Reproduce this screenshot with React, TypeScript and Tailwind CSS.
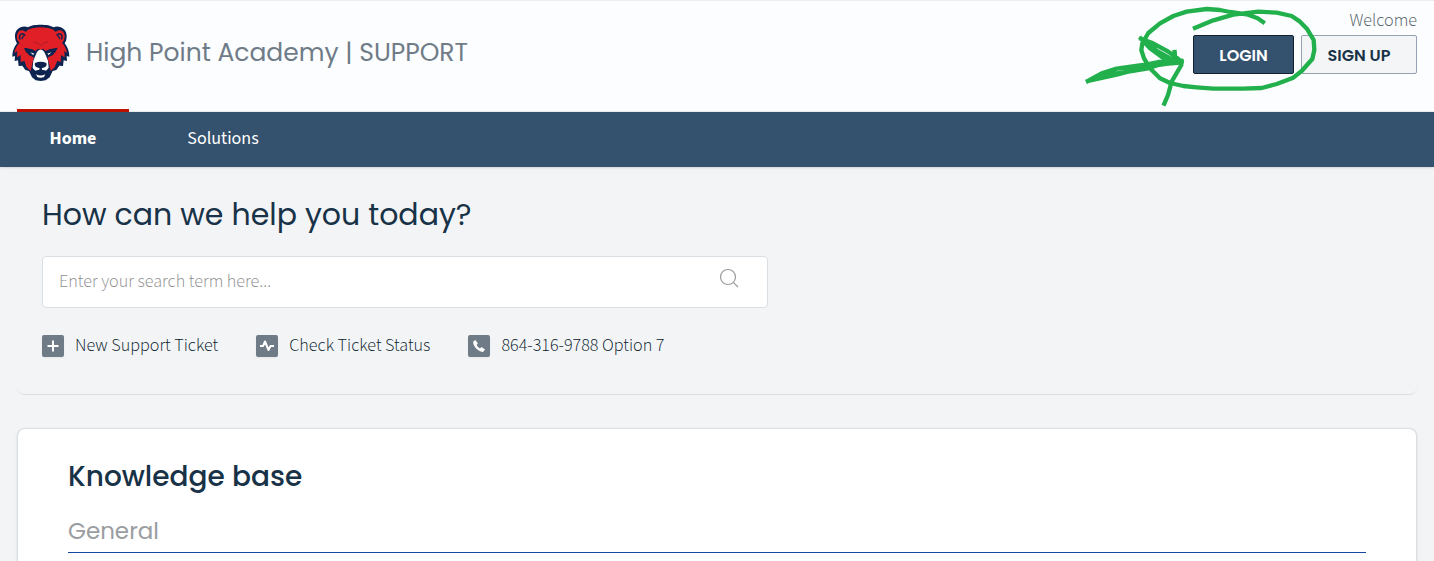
import { FormEvent, ReactNode, useState } from "react";

const display = "font-['Poppins','Inter',sans-serif]";
const body = "font-['Source_Sans_Pro','Source_Sans_3','Noto_Sans_CJK_SC','Noto_Sans',sans-serif]";

function BearLogo() {
  return (
    <svg className="size-[60px] shrink-0" viewBox="33 40 180 180" aria-hidden="true">
      <path
        fill="#0d2350"
        d="M84 53C97 43 147 43 160 53C178 45 201 58 200 80C200 90 197 97 194 101C201 110 208 123 208 141L200 139L201 154L191 152L189 169L178 168L169 181L158 184L149 203L137 212L122 214L107 212L96 203L87 184L76 181L67 168L56 169L54 152L44 154L45 139L37 141C37 123 44 110 51 101C48 97 45 90 45 80C44 58 66 45 84 53Z"
      />
      <path
        fill="#e01f26"
        d="M84 60C99 50 145 50 160 60L167 67C178 57 192 63 194 77C195 88 191 95 186 99C194 108 199 117 201 130L193 124L194 143L183 136L182 158L172 153L164 173L152 184L146 157L142 141L166 128L172 116L150 119L137 124L130 117L122 121L114 117L107 124L94 119L72 116L78 128L102 141L98 157L92 184L80 173L73 153L62 158L62 136L51 143L52 124L43 130C45 117 50 108 59 99C54 95 49 88 51 77C53 63 67 57 77 67Z"
      />
      <path
        fill="none"
        stroke="#0d2350"
        strokeWidth="4"
        strokeLinecap="round"
        d="M60 88C55 74 66 68 74 76Q68 80 66 87M185 88C190 74 179 68 171 76Q177 80 179 87"
      />
      <path
        fill="#0d2350"
        d="M72 114L96 119L115 129L104 144L86 136ZM173 114L149 119L130 129L141 144L159 136Z"
      />
      <path
        fill="none"
        stroke="#b01c2a"
        strokeWidth="3"
        d="M100 97L114 101L122 108L130 101L144 97"
      />
      <path
        fill="#fff"
        d="M108 134Q112 120 122 120Q132 120 136 134L144 153L146 174L139 183L126 180L122 172L118 180L105 183L98 174L100 153ZM91 128L103 132L99 136ZM154 128L142 132L146 136ZM108 194Q122 201 136 194L132 202Q122 207 112 202Z"
      />
      <path
        fill="#0d2350"
        d="M105 160Q122 152 139 160Q142 168 134 173L125 176V183L138 184L145 179L139 190L122 194L105 190L99 179L106 184L119 183V176L110 173Q102 168 105 160Z"
      />
    </svg>
  );
}

// Hand-drawn marker around the login button
function LoginMarker() {
  return (
    <svg
      className="pointer-events-none absolute -top-px right-0 h-[115px] w-[354px]"
      viewBox="0 0 1062 345"
      fill="none"
      stroke="#22b04c"
      strokeWidth="13"
      strokeLinecap="square"
      strokeLinejoin="round"
      aria-hidden="true"
    >
      <path d="M549 66L533 55L500 43L450 36L420 30L380 27L320 35L280 48L240 70L205 99L187 130L184 150L192 175L210 205L240 235L270 249L310 258L350 262L400 266H490L545 264L590 252L640 233L665 213L697 177L703 150L701 120L682 88L660 65L635 48L590 38L535 35L460 44L400 61L345 84" />
      <path d="M24 243L65 220L110 206L190 195L235 186L305 184M30 242L100 222L200 206L240 193L300 188M24 243L110 224L210 198L270 190L290 184" />
      <path d="M183 116L215 128L265 155L284 168L304 185M183 116L210 145L255 178L275 187L303 183M192 120L230 153L268 174L290 184M284 156L286 178L300 184" />
      <path d="M303 184L304 195L275 245L264 285L253 311" />
    </svg>
  );
}

function QuickLink({ label, children }: { label: string; children: ReactNode }) {
  return (
    <a href="#" className="flex items-center gap-[11px] text-[#06192a]">
      <span className="flex size-[22px] items-center justify-center rounded-xs bg-[#6f7c87] text-white shadow-xs">
        <svg className="size-4" viewBox="0 0 16 16" fill="none" stroke="currentColor" strokeWidth="2">
          {children}
        </svg>
      </span>
      {label}
    </a>
  );
}

function Header() {
  return (
    <header className="relative flex h-28 justify-between border-y border-[#ebedef] bg-[#fcfdff] pr-[17px] pl-[11px]">
      <a href="#" className="flex h-[104px] items-center gap-[15px] text-[#6f7c87]">
        <BearLogo />
        <span className={`${display} text-[25px] whitespace-nowrap`}>
          High Point Academy | SUPPORT
        </span>
      </a>
      <div className="flex flex-col items-end pt-2">
        <span className="text-lg leading-6 font-light text-[#4d5963]">Welcome</span>
        <div className={`${display} mt-[2px] flex gap-[7px] text-base font-semibold`}>
          <button className="h-[39px] w-[101px] rounded-xs border border-[#10222f] bg-[#34516d] pt-[3px] text-white">
            LOGIN
          </button>
          <button className="h-[39px] w-[116px] rounded-xs border border-[#94a2b3] bg-[#f3f5f7] pt-[3px] text-[#183247]">
            SIGN UP
          </button>
        </div>
      </div>
      <LoginMarker />
    </header>
  );
}

function Nav() {
  return (
    <nav className="relative flex h-[55px] bg-[#34516d] px-[17px] pb-[2px] text-lg text-white shadow-sm">
      <a
        href="#"
        className="-mt-[3px] flex w-28 items-center justify-center border-t-3 border-[#bb1100] font-bold"
      >
        Home
      </a>
      <a href="#" className="ml-[26px] flex w-[136px] items-center justify-center">
        Solutions
      </a>
    </nav>
  );
}

function HelpSearch() {
  const [term, setTerm] = useState("");

  function handleSubmit(event: FormEvent) {
    event.preventDefault();
  }

  return (
    <section className="mx-[17px] rounded-b-lg border-b border-[#dadfe3] px-[25px] pt-[27px] pb-[37px]">
      <h2 className={`${display} text-[30px] leading-[42px] text-[#183247]`}>
        How can we help you today?
      </h2>
      <form
        onSubmit={handleSubmit}
        className="mt-5 flex h-[52px] max-w-[726px] items-center rounded border border-[#dadfe3] bg-white pr-7 pl-4"
      >
        <input
          type="text"
          aria-label="Search"
          value={term}
          onChange={(event) => setTerm(event.target.value)}
          placeholder="Enter your search term here..."
          className="min-w-0 flex-1 text-lg font-light text-[#183247] outline-none placeholder:text-[#8c8c8c]"
        />
        <button type="submit" aria-label="Submit search" className="mb-2 text-[#9b9b9b]">
          <svg className="size-5" viewBox="0 0 20 20" fill="none" stroke="currentColor" strokeWidth="1.2">
            <circle cx="9" cy="9" r="7.5" />
            <path d="M14.3 14.3L19 19" />
          </svg>
        </button>
      </form>
      <div className="mt-[26px] flex flex-wrap gap-x-[38px] text-lg leading-[23px] font-light">
        <QuickLink label="New Support Ticket">
          <path d="M8 2.5V13.5M2.5 8H13.5" />
        </QuickLink>
        <QuickLink label="Check Ticket Status">
          <path d="M1 8H4L6 3.5L9.5 12L11.5 8H15" strokeLinejoin="round" />
        </QuickLink>
        <QuickLink label="864-316-9788 Option 7">
          <path
            d="M2.2 3.6L4.4 2L6.9 5.4L5.6 7Q6.6 9.3 9 10.4L10.6 9.1L14 11.4L12.2 13.8Q9.4 14.4 5.4 10.8Q1.8 7 2.2 3.6Z"
            fill="currentColor"
            stroke="none"
          />
        </QuickLink>
      </div>
    </section>
  );
}

function KnowledgeBase() {
  return (
    <section
      className={`${display} mx-[17px] mt-[33px] flex-1 rounded-t-lg border border-b-0 border-[#dadfe3] bg-white px-[50px] pt-7 shadow-sm`}
    >
      <h2 className="text-[28px] leading-10 font-medium text-[#183247]">Knowledge base</h2>
      <h3 className="mt-4 border-b border-[#1747a0] pb-[3px] text-[23px] leading-9 text-[#9a9da1]">
        General
      </h3>
    </section>
  );
}

export default function App() {
  return (
    <div className={`${body} flex min-h-screen flex-col bg-[#f3f4f6]`}>
      <Header />
      <Nav />
      <main className="flex flex-1 flex-col">
        <HelpSearch />
        <KnowledgeBase />
      </main>
    </div>
  );
}
